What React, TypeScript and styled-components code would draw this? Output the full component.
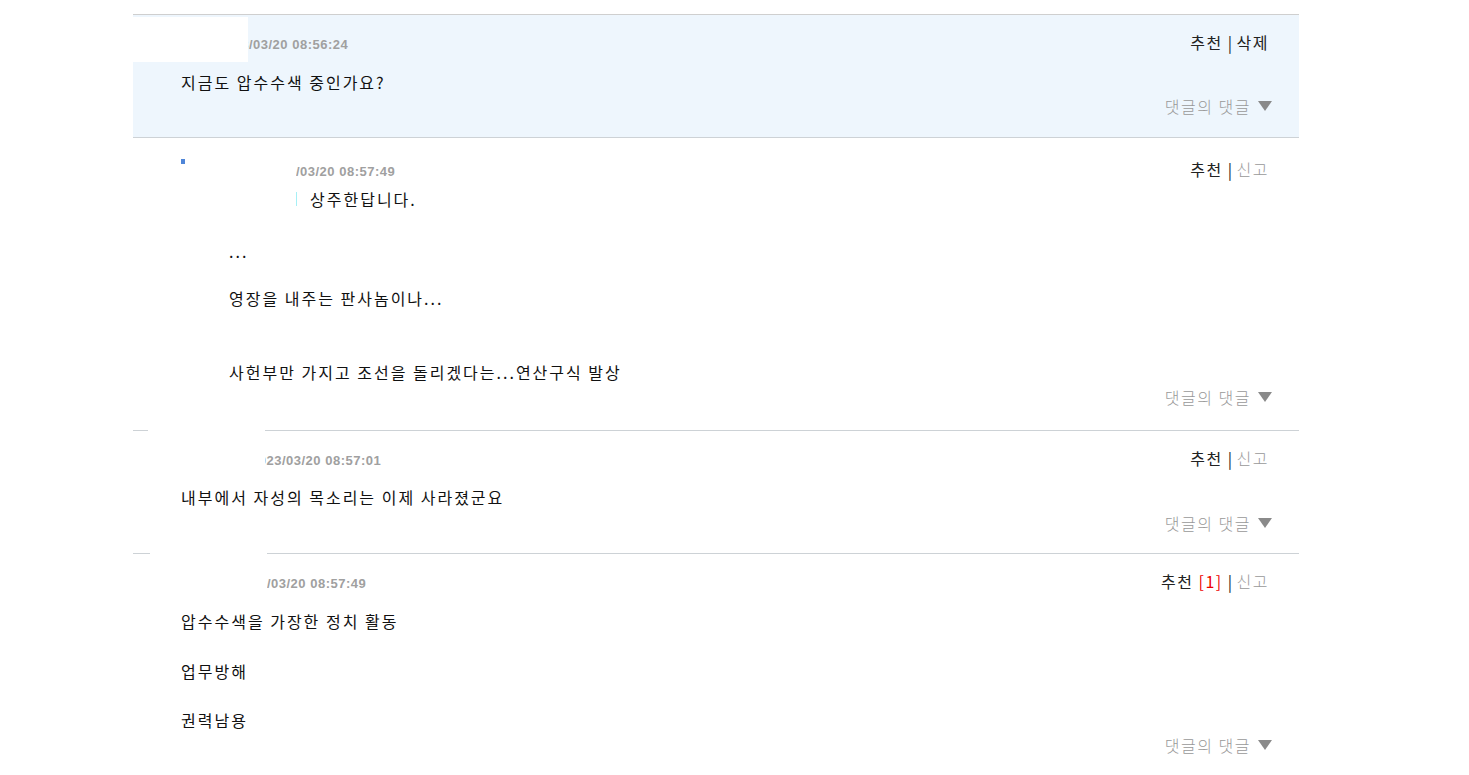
import React from 'react'
import styled, { createGlobalStyle } from 'styled-components'

const GlobalStyle = createGlobalStyle`
  body {
    margin: 0;
    background: #fff;
    font-family: 'Noto Sans CJK KR', 'Liberation Sans', sans-serif;
  }
`

type Comment = {
  id: number
  date: string
  nickWidth: number
  mine?: boolean
  reply?: boolean
  likes?: number
  bodyGap: number
  replyGap: number
  padBottom: number
  lines: { text: string; gap: number; mention?: boolean }[]
  redact?: { left: number; top: number; w: number; h: number }
}

const comments: Comment[] = [
  {
    id: 1,
    date: '2023/03/20 08:56:24',
    nickWidth: 37,
    mine: true,
    bodyGap: 14,
    replyGap: 1,
    padBottom: 20,
    lines: [{ text: '지금도 압수수색 중인가요?', gap: 0 }],
    redact: { left: 0, top: 2, w: 115, h: 45 },
  },
  {
    id: 2,
    date: '2023/03/20 08:57:49',
    nickWidth: 84,
    reply: true,
    bodyGap: 4,
    replyGap: 2,
    padBottom: 22,
    lines: [
      { text: '상주한답니다.', gap: 0, mention: true },
      { text: '...', gap: 28 },
      { text: '영장을 내주는 판사놈이나...', gap: 23 },
      { text: '사헌부만 가지고 조선을 돌리겠다는...연산구식 발상', gap: 50 },
    ],
    redact: { left: 52, top: 12, w: 111, h: 37 },
  },
  {
    id: 3,
    date: '2023/03/20 08:57:01',
    nickWidth: 70,
    bodyGap: 13,
    replyGap: 3,
    padBottom: 19,
    lines: [{ text: '내부에서 자성의 목소리는 이제 사라졌군요', gap: 0 }],
    redact: { left: 15, top: -3, w: 117, h: 45 },
  },
  {
    id: 4,
    date: '2023/03/20 08:57:49',
    nickWidth: 55,
    likes: 1,
    bodyGap: 14,
    replyGap: 2,
    padBottom: 20,
    lines: [
      { text: '압수수색을 가장한 정치 활동', gap: 0 },
      { text: '업무방해', gap: 26 },
      { text: '권력남용', gap: 25 },
    ],
    redact: { left: 17, top: -3, w: 117, h: 45 },
  },
]

const App = () => {
  return (
    <>
      <GlobalStyle />
      <List>
        {comments.map((c) => (
          <Item key={c.id} $mine={c.mine} $padBottom={c.padBottom}>
            {c.redact && <Redact $left={c.redact.left} $top={c.redact.top} $w={c.redact.w} $h={c.redact.h} />}
            <Header $reply={c.reply}>
              <Writer $w={c.nickWidth}>{c.reply && <ReplyMark />}</Writer>
              <DateText>{c.date}</DateText>
              <Actions>
                <Act>추천</Act>
                {c.likes ? <Count>[{c.likes}]</Count> : null}
                <Sep>|</Sep>
                <Act $muted={!c.mine}>{c.mine ? '삭제' : '신고'}</Act>
              </Actions>
            </Header>
            <Body $reply={c.reply} $gap={c.bodyGap}>
              {c.lines.map((l, i) => (
                <Line key={i} $gap={l.gap}>
                  {l.mention && <Mention />}
                  {l.text}
                </Line>
              ))}
            </Body>
            <ReplyRow $gap={c.replyGap}>
              댓글의 댓글
              <Arrow />
            </ReplyRow>
          </Item>
        ))}
      </List>
    </>
  )
}

export default App

const List = styled.div`
  margin: 14px 0 0 133px;
  width: 1166px;
  border-top: 1px solid #cfcfcf;
`

const Item = styled.div<{ $mine?: boolean; $padBottom: number }>`
  position: relative;
  padding: 17px 0 ${(p) => p.$padBottom}px;
  border-bottom: 1px solid #cdd2d6;
  background: ${(p) => (p.$mine ? '#eef6fd' : '#fff')};
`

const Redact = styled.div<{ $left: number; $top: number; $w: number; $h: number }>`
  position: absolute;
  left: ${(p) => p.$left}px;
  top: ${(p) => p.$top}px;
  width: ${(p) => p.$w}px;
  height: ${(p) => p.$h}px;
  background: #fff;
  z-index: 2;
`

const Header = styled.div<{ $reply?: boolean }>`
  display: flex;
  align-items: center;
  height: 24px;
  padding: 0 30px 0 48px;
  margin-top: ${(p) => (p.$reply ? '4px' : '0')};
`

const Writer = styled.span<{ $w: number }>`
  width: ${(p) => p.$w}px;
  height: 24px;
  flex-shrink: 0;
  position: relative;
`

const ReplyMark = styled.span`
  position: absolute;
  left: 0;
  top: 0;
  width: 4px;
  height: 5px;
  background: #4f86d8;
`

const DateText = styled.span`
  font-family: 'Liberation Sans', Arial, sans-serif;
  font-size: 13px;
  font-weight: bold;
  letter-spacing: 0.5px;
  color: #a0a0a0;
`

const Actions = styled.div`
  margin-left: auto;
  display: flex;
  align-items: center;
  padding-bottom: 4px;
  font-size: 16px;
  letter-spacing: 1.5px;
`

const Act = styled.span<{ $muted?: boolean }>`
  color: ${(p) => (p.$muted ? '#999' : '#222')};
  font-weight: ${(p) => (p.$muted ? 300 : 400)};
`

const Count = styled.span`
  color: #e00;
  margin-left: 5px;
`

const Sep = styled.span`
  margin: 0 3px 0 5px;
  color: #222;
`

const Body = styled.div<{ $reply?: boolean; $gap: number }>`
  margin-top: ${(p) => p.$gap}px;
  padding-left: ${(p) => (p.$reply ? '96px' : '48px')};
  font-size: 16px;
  letter-spacing: 2px;
  color: #111;
`

const Line = styled.div<{ $gap: number }>`
  display: flex;
  align-items: center;
  height: 24px;
  margin-top: ${(p) => p.$gap}px;
  white-space: pre;
`

const Mention = styled.span`
  width: 67px;
  height: 14px;
  border-right: 1px solid #a6f0f6;
  margin-right: 13px;
`

const ReplyRow = styled.div<{ $gap: number }>`
  display: flex;
  align-items: center;
  justify-content: flex-end;
  height: 22px;
  margin-top: ${(p) => p.$gap}px;
  padding-right: 27px;
  font-size: 16px;
  letter-spacing: 1.5px;
  font-weight: 300;
  color: #999;
`

const Arrow = styled.span`
  margin-left: 7px;
  width: 0;
  height: 0;
  border-left: 7px solid transparent;
  border-right: 7px solid transparent;
  border-top: 10px solid #8a8a8a;
`
